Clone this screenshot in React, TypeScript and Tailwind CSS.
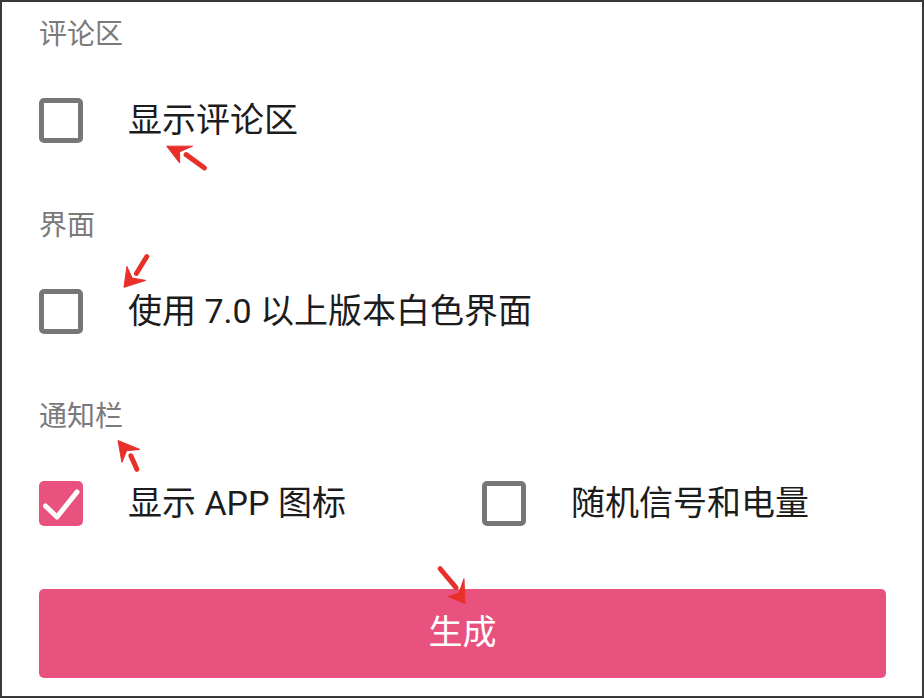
// Settings panel — comment, interface and notification-bar options with a generate button.
// Red annotation arrows are drawn as an overlay on top.

const font = { fontFamily: 'Roboto, "Noto Sans CJK SC", "Noto Sans", sans-serif' };

function SectionTitle({ children }: { children: string }) {
  return <p className="pb-[1px] text-[28px] leading-[39px] text-[#7a7a7a]">{children}</p>;
}

function Checkbox({ checked = false }: { checked?: boolean }) {
  if (checked) {
    return (
      <span className="flex h-[45px] w-[44px] shrink-0 items-center justify-center rounded-[5px] bg-[#e9527f]">
        <svg viewBox="0 0 44 45" className="h-[45px] w-[44px]">
          <path d="M6.5 25 L18 36 L38 11" fill="none" stroke="white" strokeWidth="5" strokeLinecap="round" strokeLinejoin="round" />
        </svg>
      </span>
    );
  }
  return <span className="h-[45px] w-[44px] shrink-0 rounded-[5px] border-[5px] border-[#777777] bg-white" />;
}

function Option({ label, checked }: { label: string; checked?: boolean }) {
  return (
    <label className="flex h-[45px] items-center gap-[45px]">
      <Checkbox checked={checked} />
      <span className="text-[34px] leading-[45px] text-[#1c1c1c]">{label}</span>
    </label>
  );
}

// tail -> tip, with two barb points
const arrows = [
  { tail: [203, 167], tip: [165, 145], a: [191, 145], b: [178, 162] },
  { tail: [145, 256], tip: [122, 287], a: [125, 266], b: [144, 280] },
  { tail: [135, 470], tip: [116, 441], a: [138, 450], b: [120, 463] },
  { tail: [440, 570], tip: [465, 605], a: [464, 580], b: [448, 598] },
];

function Arrows() {
  return (
    <svg viewBox="0 0 924 698" className="pointer-events-none absolute inset-0 h-full w-full">
      {arrows.map((ar, i) => {
        const mx = (ar.a[0] + ar.b[0]) / 2;
        const my = (ar.a[1] + ar.b[1]) / 2;
        return (
          <g key={i} fill="#e8302b" stroke="#e8302b">
            <line x1={ar.tail[0]} y1={ar.tail[1]} x2={mx} y2={my} strokeWidth="5" strokeLinecap="round" />
            <polygon
              points={`${ar.tip[0]},${ar.tip[1]} ${ar.a[0]},${ar.a[1]} ${(mx * 2 + ar.tip[0]) / 3},${(my * 2 + ar.tip[1]) / 3} ${ar.b[0]},${ar.b[1]}`}
              strokeWidth="1"
              strokeLinejoin="round"
            />
          </g>
        );
      })}
    </svg>
  );
}

export default function App() {
  return (
    <div style={font} className="relative flex h-[698px] w-[924px] flex-col border-2 border-[#3a3a3a] bg-white pl-[37px] pr-[36px] pt-[13px]">
      <SectionTitle>评论区</SectionTitle>
      <div className="mt-[43px]">
        <Option label="显示评论区" />
      </div>

      <div className="mt-[63px]">
        <SectionTitle>界面</SectionTitle>
      </div>
      <div className="mt-[43px]">
        <Option label="使用 7.0 以上版本白色界面" />
      </div>

      <div className="mt-[63px]">
        <SectionTitle>通知栏</SectionTitle>
      </div>
      <div className="mt-[44px] flex">
        <div className="w-[443px]">
          <Option label="显示 APP 图标" checked />
        </div>
        <Option label="随机信号和电量" />
      </div>

      <button className="mt-[63px] h-[89px] w-full shrink-0 rounded-[5px] bg-[#e9527f] pb-[2px] text-[34px] text-white">生成</button>

      <Arrows />
    </div>
  );
}
